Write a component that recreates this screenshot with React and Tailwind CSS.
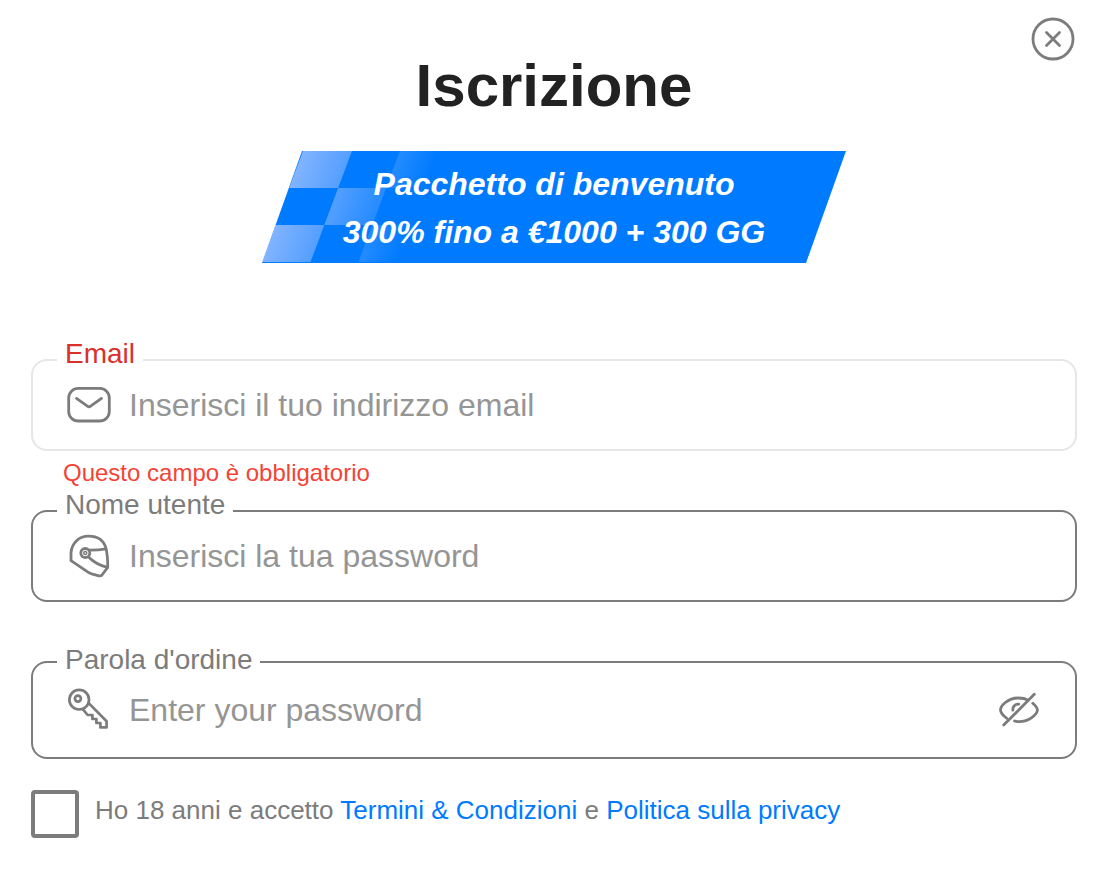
import { useState } from 'react';

const MailIcon = () => (
  <svg className="size-12" viewBox="0 0 48 48" fill="none" stroke="#7c7c7c" strokeWidth="2.8" strokeLinecap="round" strokeLinejoin="round">
    <rect x="3.7" y="7.4" width="40.6" height="32.6" rx="9.5" />
    <path d="M11.5 17.4 L22.4 25.2 Q24 26.4 25.6 25.2 L36.5 17.4" />
  </svg>
);

const HelmetIcon = () => (
  <svg className="size-12" viewBox="0 0 48 48" fill="none" stroke="#7c7c7c" strokeWidth="2.8" strokeLinecap="round" strokeLinejoin="round">
    <path d="M6 28.7 V20.5 C7 11 14 4.2 23.5 4.2 C33 4.2 39 9 41 16.5 C42.3 22 42.8 29 42.7 35.3 L37 43 Q36 44.3 34 43.8 L27.5 42.2 Q25 41.5 23 40.2 Z" />
    <path d="M25 18.2 Q34 18 41 16.8" />
    <path d="M23.8 25.2 Q31 32.5 42.3 35.3" />
    <circle cx="20.3" cy="21" r="4.5" />
    <circle cx="20.3" cy="21" r="1.5" strokeWidth="1.5" />
  </svg>
);

const KeyIcon = () => (
  <svg className="size-12" viewBox="0 0 48 48" fill="none" stroke="#7c7c7c" strokeWidth="2.7" strokeLinecap="round" strokeLinejoin="round">
    <circle cx="14.2" cy="13.7" r="9.8" />
    <circle cx="12.9" cy="12.6" r="3" />
    <path d="M24.2 17.6 L41.6 35.2 V41.4 H35.4 V37 H31.4 V33 H27.4 V29 H22.6 L18 23.4" />
  </svg>
);

const EyeOffIcon = () => (
  <svg className="size-12" viewBox="0 0 48 48" fill="none" stroke="#7c7c7c" strokeWidth="2.8" strokeLinecap="round" strokeLinejoin="round">
    <path d="M12 32.5 C8 29.5 5.5 26.5 5.5 24 C5.5 20 12.5 12 23.5 12 C27.5 12 31 13 33.2 14.3" />
    <path d="M37.8 17.2 C40.6 19.6 42.4 22.2 42.4 24 C42.4 28 34.5 35.6 24 35.6 C22.2 35.6 20.8 35.4 19.6 35" />
    <path d="M17.9 24.2 C17.4 20.8 20.2 17.9 23.8 18.2" />
    <path d="M8.7 39 L39.3 8.3" />
  </svg>
);

const CloseIcon = () => (
  <svg className="size-11" viewBox="0 0 44 44" fill="none" stroke="#7c7c7c" strokeWidth="2.8" strokeLinecap="round">
    <circle cx="22" cy="22" r="20" />
    <path d="M15.5 15.5 L28.5 28.5 M28.5 15.5 L15.5 28.5" />
  </svg>
);

const Banner = () => (
  <div className="relative w-[584px] max-w-full bg-[#007bff] pt-[9px] pb-[7px] text-center text-[32px] leading-[48px] font-bold text-white italic [clip-path:polygon(40px_0,100%_0,calc(100%-40px)_100%,0_100%)]">
    <svg className="absolute top-0 left-0" width="200" height="112" viewBox="0 0 200 112" aria-hidden="true">
      <defs>
        <linearGradient id="checker" gradientUnits="userSpaceOnUse" x1="41" y1="0" x2="176" y2="0">
          <stop offset="0" stopColor="#f2e4ff" stopOpacity="0.54" />
          <stop offset="1" stopColor="#f2e4ff" stopOpacity="0" />
        </linearGradient>
      </defs>
      <g fill="url(#checker)" transform="skewX(-20.5)">
        <rect x="41" y="0" width="49" height="37" />
        <rect x="138" y="0" width="49" height="37" />
        <rect x="90" y="37" width="48" height="37" />
        <rect x="41" y="74" width="49" height="37" />
        <rect x="138" y="74" width="49" height="37" />
      </g>
    </svg>
    <p className="relative">Pacchetto di benvenuto</p>
    <p className="relative">300% fino a €1000 + 300 GG</p>
  </div>
);

const Field = ({ id, label, type = 'text', placeholder, icon, error, tall, action }) => (
  <div>
    <fieldset
      className={`min-w-0 rounded-2xl border-2 pr-8 pl-6 ${tall ? 'pb-[15px]' : 'pb-[19px]'} ${
        error ? 'border-[#e6e6e9]' : 'border-[#7c7c7c]'
      }`}
    >
      <legend className={`px-2 text-[28px] leading-7 ${tall ? 'pb-1' : 'pb-3'} ${error ? 'text-[#d9302c]' : 'text-[#7c7c7c]'}`}>
        <label htmlFor={id}>{label}</label>
      </legend>
      <div className={`flex items-center gap-4 pl-2 ${tall ? 'h-16' : 'h-[50px]'}`}>
        {icon}
        <input
          id={id}
          type={type}
          placeholder={placeholder}
          aria-invalid={Boolean(error)}
          className="h-10 min-w-0 flex-1 bg-transparent text-[32px] text-[#222] outline-none placeholder:text-[#959595]"
        />
        {action}
      </div>
    </fieldset>
    {error && <p className="pt-1 pl-8 text-2xl leading-9 text-[#f44336]">{error}</p>}
  </div>
);

const App = () => {
  const [showPassword, setShowPassword] = useState(false);
  const [accepted, setAccepted] = useState(false);

  return (
    <main className="bg-white pt-[17px] pr-[25px] pb-12 pl-[31px] font-['Liberation_Sans',Arial,sans-serif]">
      <div className="flex justify-end pr-0.5">
        <button type="button" aria-label="Chiudi">
          <CloseIcon />
        </button>
      </div>

      <h1 className="text-center text-6xl leading-[50px] font-bold text-[#222]">Iscrizione</h1>

      <div className="mt-10 flex justify-center">
        <Banner />
      </div>

      <form className="mt-[77px]">
        <Field
          id="email"
          label="Email"
          type="email"
          placeholder="Inserisci il tuo indirizzo email"
          icon={<MailIcon />}
          error="Questo campo è obbligatorio"
        />
        <Field
          id="username"
          label="Nome utente"
          placeholder="Inserisci la tua password"
          icon={<HelmetIcon />}
        />
        <div className="mt-11">
          <Field
            id="password"
            label="Parola d'ordine"
            type={showPassword ? 'text' : 'password'}
            placeholder="Enter your password"
            icon={<KeyIcon />}
            tall
            action={
              <button type="button" aria-label="Mostra password" onClick={() => setShowPassword(!showPassword)}>
                <EyeOffIcon />
              </button>
            }
          />
        </div>

        <div className="mt-[31px] flex items-start gap-4">
          <input
            id="terms"
            type="checkbox"
            checked={accepted}
            onChange={(e) => setAccepted(e.target.checked)}
            className="size-12 shrink-0 appearance-none rounded border-4 border-[#7c7c7c] bg-white checked:bg-[#007bff]"
          />
          <label htmlFor="terms" className="text-[26px] leading-10 text-[#7c7c7c]">
            Ho 18 anni e accetto{' '}
            <a href="#termini" className="text-[#007bff]">Termini &amp; Condizioni</a> e{' '}
            <a href="#privacy" className="text-[#007bff]">Politica sulla privacy</a>
          </label>
        </div>
      </form>
    </main>
  );
};

export default App;
